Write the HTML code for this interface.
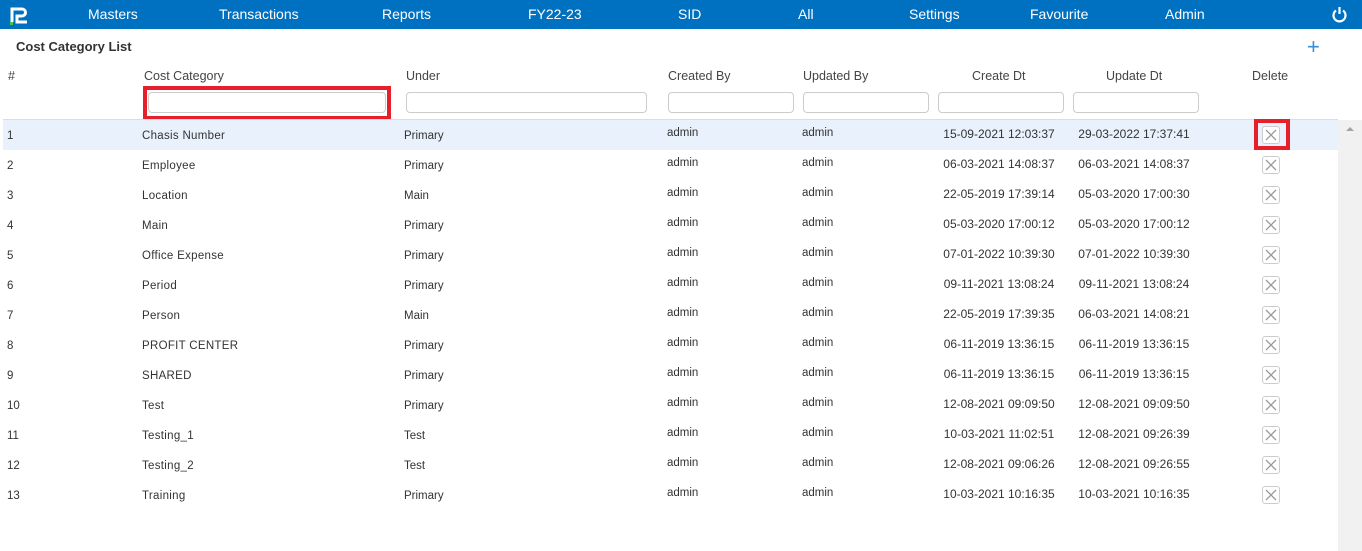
<!DOCTYPE html>
<html><head><style>
*{margin:0;padding:0;box-sizing:border-box}
body{width:1362px;height:551px;overflow:hidden;background:#fff;font-family:"Liberation Sans",sans-serif;color:#333;position:relative}
.nav{position:absolute;left:0;top:0;width:1362px;height:29px;background:#0070c0}
.nav span{position:absolute;top:6px;color:#fff;font-size:14px}
.abs{position:absolute;white-space:nowrap}
.h{font-size:12.5px;color:#444;top:69px}
.inp{position:absolute;top:92px;height:21px;border:1px solid #ccc;border-radius:4px;background:#fff}
.row{position:absolute;left:0;width:1338px;height:30px;font-size:11.5px;color:#333}
.row div{position:absolute;white-space:nowrap}
.row .d{font-size:12px}
.x{position:absolute;left:1262px;width:18px;height:18px;border:1px solid #ccc;border-radius:3px;background:#fff}
</style></head><body>
<div class="nav">
<svg style="position:absolute;left:9px;top:5px" width="20" height="20" viewBox="0 0 20 20"><path d="M3 17V4h10a3.5 3.5 0 0 1 0 7H8v6h10" stroke="#fff" stroke-width="3" fill="none"/><rect x="1" y="17" width="3" height="3" fill="#4c4"/></svg>
<span style="left:88px">Masters</span><span style="left:219px">Transactions</span><span style="left:382px">Reports</span><span style="left:528px">FY22-23</span><span style="left:678px">SID</span><span style="left:798px">All</span><span style="left:909px">Settings</span><span style="left:1030px">Favourite</span><span style="left:1165px">Admin</span>
<svg style="position:absolute;left:1331px;top:6px" width="17" height="17" viewBox="0 0 17 17"><path d="M5 4.5A6 6 0 1 0 12 4.5" stroke="#fff" stroke-width="2.2" fill="none"/><path d="M8.5 1v7" stroke="#fff" stroke-width="2.2"/></svg>
</div>
<div class="abs" style="left:16px;top:39px;font-size:13px;font-weight:bold;color:#333">Cost Category List</div>
<div class="abs" style="left:1307px;top:34px;font-size:22px;color:#3a8fd6;font-weight:300">+</div>
<div class="abs h" style="left:8px">#</div>
<div class="abs h" style="left:144px">Cost Category</div>
<div class="abs h" style="left:406px">Under</div>
<div class="abs h" style="left:668px">Created By</div>
<div class="abs h" style="left:803px">Updated By</div>
<div class="abs h" style="left:972px">Create Dt</div>
<div class="abs h" style="left:1106px">Update Dt</div>
<div class="abs h" style="left:1252px">Delete</div>
<div style="position:absolute;left:143px;top:86px;width:248px;height:34px;border:4px solid #e5202a"></div>
<div class="inp" style="left:148px;width:238px"></div>
<div class="inp" style="left:406px;width:241px"></div>
<div class="inp" style="left:668px;width:126px"></div>
<div class="inp" style="left:803px;width:126px"></div>
<div class="inp" style="left:938px;width:126px"></div>
<div class="inp" style="left:1073px;width:126px"></div>
<div style="position:absolute;left:1338px;top:120px;width:24px;height:431px;background:#f1f1f1"></div>
<div style="position:absolute;left:1346px;top:127px;border:4px solid transparent;border-bottom:4px solid #a3a3a3;border-top:none"></div>
<div style="position:absolute;left:3px;top:119px;width:1335px;height:1px;background:#ddd"></div>
<div id="rows"></div>
<script>
var d=[["Chasis Number","Primary","15-09-2021 12:03:37","29-03-2022 17:37:41"],["Employee","Primary","06-03-2021 14:08:37","06-03-2021 14:08:37"],["Location","Main","22-05-2019 17:39:14","05-03-2020 17:00:30"],["Main","Primary","05-03-2020 17:00:12","05-03-2020 17:00:12"],["Office Expense","Primary","07-01-2022 10:39:30","07-01-2022 10:39:30"],["Period","Primary","09-11-2021 13:08:24","09-11-2021 13:08:24"],["Person","Main","22-05-2019 17:39:35","06-03-2021 14:08:21"],["PROFIT CENTER","Primary","06-11-2019 13:36:15","06-11-2019 13:36:15"],["SHARED","Primary","06-11-2019 13:36:15","06-11-2019 13:36:15"],["Test","Primary","12-08-2021 09:09:50","12-08-2021 09:09:50"],["Testing_1","Test","10-03-2021 11:02:51","12-08-2021 09:26:39"],["Testing_2","Test","12-08-2021 09:06:26","12-08-2021 09:26:55"],["Training","Primary","10-03-2021 10:16:35","10-03-2021 10:16:35"]];
var h="";
d.forEach(function(r,i){var t=120+i*30;
h+='<div class="row" style="top:'+t+'px;'+(i==0?'background:#e9f1fc;left:3px;width:1335px':'')+'">'+
'<div style="left:'+(i==0?4:7)+'px;top:10px">'+(i+1)+'</div>'+
'<div style="left:'+(i==0?139:142)+'px;top:10px;letter-spacing:.3px">'+r[0]+'</div>'+
'<div style="left:'+(i==0?401:404)+'px;top:10px">'+r[1]+'</div>'+
'<div style="left:'+(i==0?664:667)+'px;top:7px">admin</div>'+
'<div style="left:'+(i==0?799:802)+'px;top:7px">admin</div>'+
'<div class="d" style="left:'+(i==0?906:909)+'px;width:180px;text-align:center;top:7px">'+r[2]+'</div>'+
'<div class="d" style="left:'+(i==0?1041:1044)+'px;width:180px;text-align:center;top:7px">'+r[3]+'</div>'+
'</div>';
h+='<div class="x" style="top:'+(t+6)+'px"><svg width="16" height="16" viewBox="0 0 16 16" style="position:absolute;left:0;top:0"><path d="M3 3L13 13M13 3L3 13" stroke="#999" stroke-width="1.3"/></svg></div>';
});
h+='<div style="position:absolute;left:1254px;top:119px;width:36px;height:31px;border:4px solid #e5202a"></div>';
document.getElementById("rows").innerHTML=h;
</script>
</body></html>
